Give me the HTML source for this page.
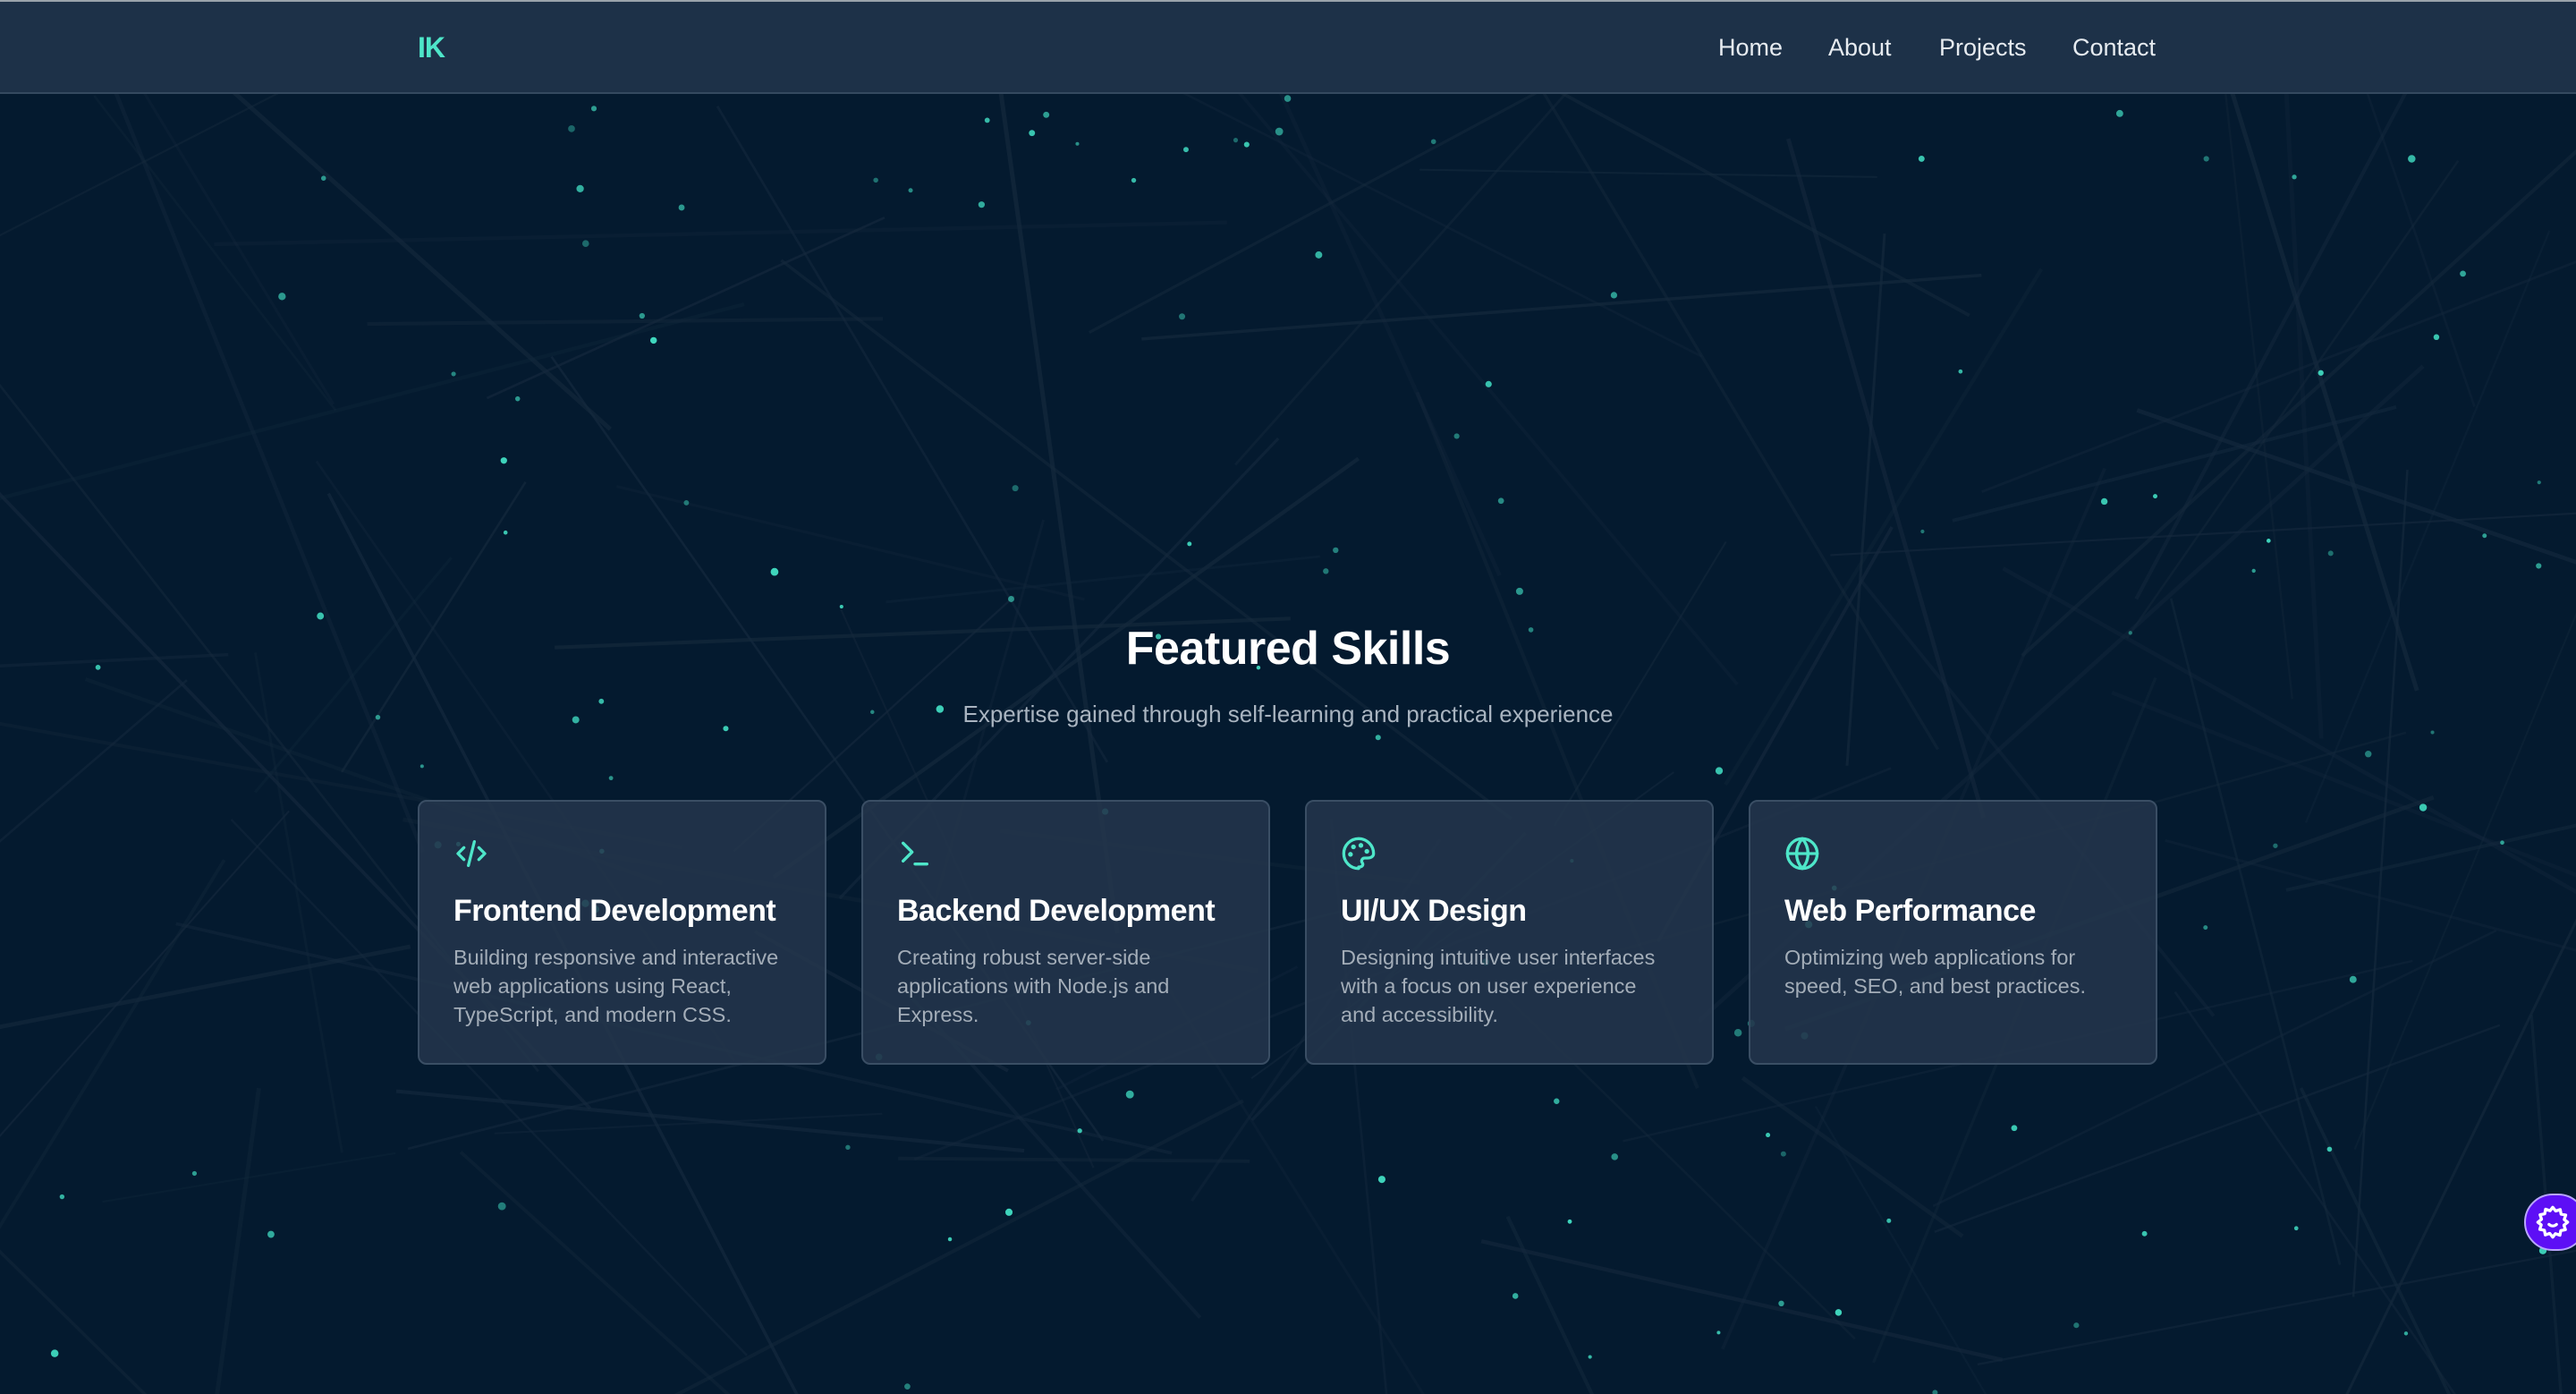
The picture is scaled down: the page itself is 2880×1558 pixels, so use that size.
<!DOCTYPE html>
<html><head><meta charset="utf-8">
<style>
html,body{margin:0;padding:0;width:2880px;height:1558px;overflow:hidden;background:#041a2f;font-family:"Liberation Sans",sans-serif;position:relative;}
#bg{position:absolute;left:0;top:0;width:2880px;height:1558px;overflow:hidden;}
header{position:absolute;left:0;top:2px;width:2880px;height:103px;background:#1d3148;border-bottom:2px solid #34495f;box-sizing:border-box;}
.topbar{position:absolute;left:0;top:0;width:2880px;height:2px;background:#9aa3ab;}
.logo{position:absolute;left:467px;top:33px;font-size:32px;font-weight:bold;color:#4ee6c9;letter-spacing:-1px;}
nav{position:absolute;top:36px;left:1921px;font-size:27px;color:#e6ebf0;}
nav span{position:absolute;white-space:nowrap;}
h2{position:absolute;left:0;width:2880px;text-align:center;top:695px;margin:0;font-size:52px;font-weight:bold;color:#fff;letter-spacing:-0.5px;}
.sub{position:absolute;left:0;width:2880px;text-align:center;top:783px;font-size:26px;color:#a9b4c0;}
.card{position:absolute;top:894px;width:457px;height:296px;box-sizing:border-box;background:rgba(36,54,76,0.85);border:2px solid #3a4e64;border-radius:10px;}
.card svg{position:absolute;left:38px;top:38px;}
.card h3{position:absolute;left:38px;top:103px;margin:0;font-size:34px;font-weight:bold;color:#fff;white-space:nowrap;letter-spacing:-0.5px;}
.card p{position:absolute;left:38px;top:158px;margin:0;width:365px;font-size:23.5px;line-height:32px;color:#a3adb8;}
.gear{position:absolute;left:2822px;top:1334px;width:70px;height:64px;border-radius:32px;background:#5d0ff5;border:2px solid #b9a5ff;box-sizing:border-box;}
</style></head><body>
<svg id="bg" width="2880" height="1558"></svg>
<div class="topbar"></div>
<header>
<div class="logo">IK</div>
<nav><span style="left:0">Home</span><span style="left:123px">About</span><span style="left:247px">Projects</span><span style="left:396px">Contact</span></nav>
</header>
<h2>Featured Skills</h2>
<div class="sub">Expertise gained through self-learning and practical experience</div>

<div class="card" style="left:467px">
<svg width="40" height="40" viewBox="0 0 24 24" fill="none" stroke="#4ee6c9" stroke-width="2" stroke-linecap="round" stroke-linejoin="round"><path d="M7 8l-4 4 4 4M17 8l4 4-4 4M14 4l-4 16"/></svg>
<h3>Frontend Development</h3>
<p>Building responsive and interactive web applications using React, TypeScript, and modern CSS.</p></div>

<div class="card" style="left:963px">
<svg width="40" height="40" viewBox="0 0 24 24" fill="none" stroke="#4ee6c9" stroke-width="2" stroke-linecap="round" stroke-linejoin="round"><path d="M4 17l6-6-6-6M12 19h8"/></svg>
<h3>Backend Development</h3>
<p>Creating robust server-side applications with Node.js and Express.</p></div>

<div class="card" style="left:1459px">
<svg width="40" height="40" viewBox="0 0 24 24" fill="none" stroke="#4ee6c9" stroke-width="2" stroke-linecap="round" stroke-linejoin="round"><path d="M12 22a10 10 0 1 1 10-10c0 2-2 3-4 3h-2a2 2 0 0 0-1.5 3.3c.6.8.3 2-1 2.5-.5.2-1 .2-1.5.2z"/><circle cx="13.5" cy="6.5" r=".6" fill="#4ee6c9"/><circle cx="17.5" cy="10.5" r=".6" fill="#4ee6c9"/><circle cx="8.5" cy="7.5" r=".6" fill="#4ee6c9"/><circle cx="6.5" cy="12.5" r=".6" fill="#4ee6c9"/></svg>
<h3>UI/UX Design</h3>
<p>Designing intuitive user interfaces with a focus on user experience and accessibility.</p></div>

<div class="card" style="left:1955px">
<svg width="40" height="40" viewBox="0 0 24 24" fill="none" stroke="#4ee6c9" stroke-width="2" stroke-linecap="round" stroke-linejoin="round"><circle cx="12" cy="12" r="10"/><path d="M2 12h20M12 2a15 15 0 0 1 0 20M12 2a15 15 0 0 0 0 20"/></svg>
<h3>Web Performance</h3>
<p>Optimizing web applications for speed, SEO, and best practices.</p></div>

<div class="gear"><svg style="position:absolute;left:10px;top:10px" width="40" height="40" viewBox="0 0 24 24" fill="none" stroke="#fff" stroke-width="2" stroke-linejoin="round"><path d="M12 2l2 2.5 3-1 .6 3.1 3.1.6-1 3L22 12l-2.5 2 1 3-3.1.6-.6 3.1-3-1L12 22l-2-2.5-3 1-.6-3.1-3.1-.6 1-3L2 12l2.5-2-1-3 3.1-.6.6-3.1 3 1z"/><path d="M9.5 13.5c1.5 1.3 3.5 1.3 5 0" stroke-linecap="round"/></svg></div>

<script>
(function(){
var s=12345;function r(){s=(s*16807)%2147483647;return s/2147483647;}
var svg=document.getElementById('bg'),h='';
for(var i=0;i<110;i++){var x=r()*2880,y=100+r()*1458,a=r()*Math.PI,l=300+r()*900;
h+='<line x1="'+(x-Math.cos(a)*l/2)+'" y1="'+(y-Math.sin(a)*l/2)+'" x2="'+(x+Math.cos(a)*l/2)+'" y2="'+(y+Math.sin(a)*l/2)+'" stroke="#15293d" stroke-opacity="'+(0.3+r()*0.4)+'" stroke-width="'+(2+r()*3)+'"/>';}
for(var j=0;j<130;j++){var cx=r()*2880,cy=110+r()*1448;
h+='<circle cx="'+cx+'" cy="'+cy+'" r="'+(2+r()*2.5)+'" fill="#3fd6bd" fill-opacity="'+(0.4+r()*0.6)+'"/>';}
svg.innerHTML=h;})();
</script>
</body></html>
